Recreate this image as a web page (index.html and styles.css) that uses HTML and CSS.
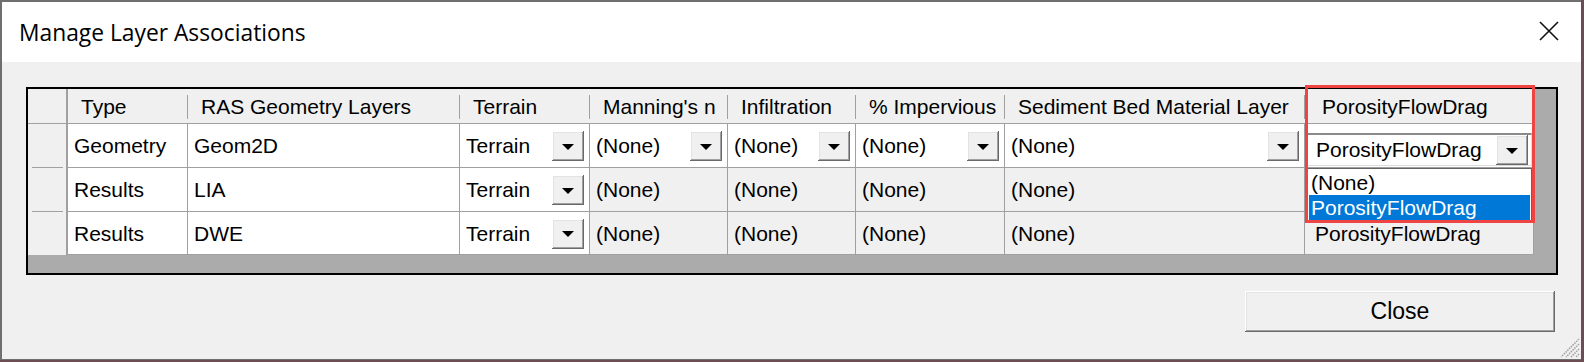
FILE: index.html
```html
<!DOCTYPE html>
<html>
<head>
<meta charset="UTF-8">
<title>Manage Layer Associations</title>
<link rel="stylesheet" href="styles.css">
</head>
<body>
<div class="window">
    <div class="titlebar">
        <span class="title">Manage Layer Associations</span>
        <svg class="close-x" width="20" height="20" viewBox="0 0 20 20">
            <path d="M1 1 L19 19 M19 1 L1 19" stroke="#111" stroke-width="1.6" fill="none"/>
        </svg>
    </div>

    <div class="content">
        <div class="grid-frame">
            <div class="grid">
                <!-- header -->
                <div class="hdr rh-hdr"></div>
                <div class="hdr">Type</div>
                <div class="hdr">RAS Geometry Layers</div>
                <div class="hdr">Terrain</div>
                <div class="hdr">Manning's n</div>
                <div class="hdr">Infiltration</div>
                <div class="hdr">% Impervious</div>
                <div class="hdr">Sediment Bed Material Layer</div>
                <div class="hdr last">PorosityFlowDrag</div>

                <!-- row 1 -->
                <div class="rh"></div>
                <div class="cell">Geometry</div>
                <div class="cell">Geom2D</div>
                <div class="cell combo"><span>Terrain</span><span class="dd-btn"></span></div>
                <div class="cell combo"><span>(None)</span><span class="dd-btn"></span></div>
                <div class="cell combo"><span>(None)</span><span class="dd-btn"></span></div>
                <div class="cell combo"><span>(None)</span><span class="dd-btn"></span></div>
                <div class="cell combo"><span>(None)</span><span class="dd-btn"></span></div>
                <div class="cell edit-cell">
                    <div class="edit-box"><span>PorosityFlowDrag</span><span class="dd-btn"></span></div>
                </div>

                <!-- row 2 -->
                <div class="rh"></div>
                <div class="cell">Results</div>
                <div class="cell">LIA</div>
                <div class="cell combo"><span>Terrain</span><span class="dd-btn"></span></div>
                <div class="cell ro">(None)</div>
                <div class="cell ro">(None)</div>
                <div class="cell ro">(None)</div>
                <div class="cell ro">(None)</div>
                <div class="cell ro last-col"></div>

                <!-- row 3 -->
                <div class="rh last-row"></div>
                <div class="cell">Results</div>
                <div class="cell">DWE</div>
                <div class="cell combo"><span>Terrain</span><span class="dd-btn"></span></div>
                <div class="cell ro">(None)</div>
                <div class="cell ro">(None)</div>
                <div class="cell ro">(None)</div>
                <div class="cell ro">(None)</div>
                <div class="cell ro last-col">PorosityFlowDrag</div>
            </div>

            <!-- open drop-down list -->
            <div class="dd-list">
                <div class="dd-item">(None)</div>
                <div class="dd-item selected">PorosityFlowDrag</div>
            </div>
            <!-- red highlight box -->
            <div class="highlight"></div>
        </div>

        <div class="footer">
            <button class="btn-close">Close</button>
        </div>

        <svg class="grip" width="24" height="24" viewBox="0 0 24 24">
            <path d="M23 5 L5 23 M23 10 L10 23 M23 15 L15 23 M23 20 L20 23" stroke="#a0a0a0" stroke-width="1.5" stroke-dasharray="1.5 1"/>
        </svg>
    </div>
</div>
</body>
</html>
```

FILE: styles.css
```css
*{
    box-sizing: border-box;
}

body{
    margin: 0;
    background-color: #6b4d53;
    width: 1584px;
    height: 362px;
    overflow: hidden;
}

.window{
    width: 1581px;
    height: 360px;
    border-left: 2px solid #6f6f6f;
    border-top: 2px solid #6f6f6f;
    border-bottom: 1px solid #6f6f6f;
    display: flex;
    flex-direction: column;
    background-color: #f0f0f0;
}

.titlebar{
    height: 60px;
    background-color: #ffffff;
    display: flex;
    align-items: center;
    justify-content: space-between;
    padding: 0 22px 0 17px;
    flex-shrink: 0;
}

.title{
    font-family: "Open Sans", "Noto Sans", sans-serif;
    font-size: 22.8px;
    color: #000;
    margin-top: 1px;
}

.close-x{
    margin-bottom: 2px;
}

.content{
    flex: 1;
    position: relative;
    padding: 25px 0 0 24px;
    font-family: "Liberation Sans", Arial, sans-serif;
    font-size: 21px;
    color: #000;
}

.grid-frame{
    position: relative;
    width: 1532px;
    height: 188px;
    border: 2px solid #000;
    background-color: #ababab;
}

.grid{
    display: grid;
    grid-template-columns: 40px 120px 272px 130px 138px 128px 149px 300px 229px;
    grid-template-rows: 35px 44px 44px 43px;
    width: 1506px;
}

.hdr{
    background-color: #f0f0f0;
    border-bottom: 1px solid #a0a0a0;
    padding-left: 13px;
    padding-top: 1px;
    display: flex;
    align-items: center;
    white-space: nowrap;
    background-image: linear-gradient(#a0a0a0, #a0a0a0);
    background-repeat: no-repeat;
    background-size: 1px 24px;
    background-position: right 0 top 6px;
}

.hdr.last{
    padding-left: 17px;
    background-image: none;
}

.rh-hdr{
    background-image: none;
    border-right: 2px solid #a0a0a0;
}

.rh{
    background-color: #f0f0f0;
    border-right: 2px solid #a0a0a0;
    background-image: linear-gradient(#a0a0a0, #a0a0a0);
    background-repeat: no-repeat;
    background-size: 31px 1px;
    background-position: left 4px bottom 0;
}

.rh.last-row{
    background-image: none;
}

.cell{
    background-color: #ffffff;
    border-right: 1px solid #a0a0a0;
    border-bottom: 1px solid #a0a0a0;
    padding-left: 6px;
    padding-top: 1px;
    display: flex;
    align-items: center;
    white-space: nowrap;
}

.cell.ro{
    background-color: #f0f0f0;
}

.cell.last-col{
    padding-left: 10px;
}

.combo{
    justify-content: space-between;
    padding-right: 5px;
}

.dd-btn{
    width: 32px;
    height: 30px;
    background-color: #f0f0f0;
    box-shadow: inset -1px -1px #696969, inset 1px 1px #ffffff, inset -2px -2px #a0a0a0, inset 2px 2px #e3e3e3;
    display: flex;
    align-items: center;
    justify-content: center;
}

.dd-btn::after{
    content: "";
    border-left: 6px solid transparent;
    border-right: 6px solid transparent;
    border-top: 6px solid #000;
    margin-top: 1px;
}

.edit-cell{
    padding: 9px 1px 0 1px;
    align-items: flex-start;
}

.edit-box{
    width: 100%;
    height: 33px;
    background-color: #ffffff;
    border-top: 2px solid #8a8a8a;
    border-left: 2px solid #8a8a8a;
    border-right: 1px solid #dcdcdc;
    border-bottom: 1px solid #dcdcdc;
    display: flex;
    align-items: center;
    justify-content: space-between;
    padding: 0 3px 0 8px;
}

/* drop-down list lying over the rows */
.dd-list{
    position: absolute;
    left: 1279px;
    top: 79px;
    width: 225px;
    background-color: #ffffff;
    border: 1px solid #646464;
    padding: 1px;
}

.dd-item{
    height: 25px;
    line-height: 25px;
    padding-left: 2px;
    white-space: nowrap;
}

.dd-item.selected{
    background-color: #0078d7;
    color: #ffffff;
}

.highlight{
    position: absolute;
    left: 1277px;
    top: -4px;
    width: 230px;
    height: 138px;
    border: 3px solid #ee4444;
}

.footer{
    display: flex;
    justify-content: flex-end;
    padding: 16px 26px 0 0;
}

.btn-close{
    width: 310px;
    height: 41px;
    font-family: "Liberation Sans", Arial, sans-serif;
    font-size: 23px;
    color: #000;
    background-color: #f0f0f0;
    border: none;
    box-shadow: inset -1px -1px #696969, inset 1px 1px #ffffff, inset -2px -2px #a0a0a0, inset 2px 2px #e3e3e3;
}

.grip{
    position: absolute;
    right: 1px;
    bottom: 1px;
}
```
